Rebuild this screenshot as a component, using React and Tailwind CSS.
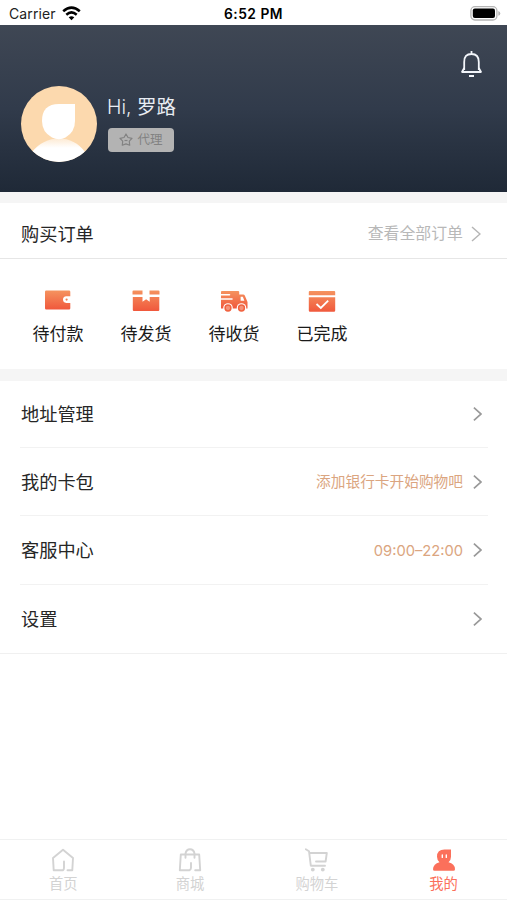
const font = "font-['Inter','Noto_Sans_CJK_SC',sans-serif]";

function Warm({ id }) {
  return (
    <defs>
      <linearGradient id={id} x1="0" y1="0" x2="0" y2="1">
        <stop offset="0" stopColor="#f5935f" />
        <stop offset="1" stopColor="#f0583c" />
      </linearGradient>
    </defs>
  );
}

function Chevron({ className, w, h, sw }) {
  return (
    <svg className={className} width={w} height={h} viewBox="0 0 10 16" fill="none" stroke="currentColor" strokeWidth={sw}>
      <path d="M1 1l8 7-8 7" />
    </svg>
  );
}

const orders = [
  {
    label: "待付款",
    icon: (
      <svg width="28" height="24" viewBox="0 0 28 24">
        <Warm id="g1" />
        <path fill="url(#g1)" d="M2.200 2.500h22.800q1.300 0 1.300 1.300v4.500h-4q-3.300.2-3.300 3.300t3.300 3.300h4v5.300q0 1.200-1.300 1.200H2.200Q1 21.400 1 20.200V3.700Q1 2.500 2.200 2.500Z" />
        <circle cx="22.600" cy="11.600" r="1.100" fill="#f28055" />
      </svg>
    ),
  },
  {
    label: "待发货",
    icon: (
      <svg width="28" height="24" viewBox="0 0 28 24">
        <defs>
          <linearGradient id="g2" gradientUnits="userSpaceOnUse" x1="0" y1="2" x2="0" y2="23">
            <stop offset="0" stopColor="#f5935f" />
            <stop offset="1" stopColor="#f0583c" />
          </linearGradient>
        </defs>
        <path fill="url(#g2)" d="M1.500 2.500h9v4h-10v-3q0-1 1-1ZM17.500 2.500h9q1 0 1 1v3h-10ZM.8 9h9.700v4.800l3.600-2.600 3.600 2.600V9h9.600v13q0 1-1 1H1.800q-1 0-1-1Z" />
      </svg>
    ),
  },
  {
    label: "待收货",
    icon: (
      <svg width="28" height="24" viewBox="0 0 28 24">
        <Warm id="g3" />
        <path fill="url(#g3)" d="M1.800 3h16.400q1 0 1 1v2.500h3.900q1.200 0 1.700 1l2.700 6.500v6.500H1V4q0-1 .8-1Z" />
        <path d="M0 6.800h9.500M0 11h12" stroke="#fff" strokeWidth="1.600" strokeLinecap="round" />
        <path d="M20.600 8.700h2.200l1.600 4h-3.800z" fill="#fff" />
        <circle cx="8" cy="20" r="4.800" fill="#fff" />
        <circle cx="21.500" cy="20" r="4.800" fill="#fff" />
        <g fill="#f4937a" stroke="#f1623f" strokeWidth="1.500">
          <circle cx="8" cy="20" r="2.900" />
          <circle cx="21.500" cy="20" r="2.900" />
        </g>
      </svg>
    ),
  },
  {
    label: "已完成",
    icon: (
      <svg width="28" height="24" viewBox="0 0 28 24">
        <defs>
          <linearGradient id="g4" gradientUnits="userSpaceOnUse" x1="0" y1="3" x2="0" y2="24">
            <stop offset="0" stopColor="#f5935f" />
            <stop offset="1" stopColor="#f0583c" />
          </linearGradient>
        </defs>
        <path fill="url(#g4)" d="M1.700 3h24.600q.9 0 .9.900v3.300H.8V3.900q0-.9.900-.9ZM.8 9.200h26.400v13.300q0 1.200-1.200 1.200H2Q.8 23.700.8 22.500Z" />
        <path d="M8.500 16l4.300 4 7.400-7.400" fill="none" stroke="#fff" strokeWidth="1.800" />
      </svg>
    ),
  },
];

const rows = [
  { label: "地址管理", height: "h-[67px]" },
  { label: "我的卡包", note: "添加银行卡开始购物吧", height: "h-[68px]" },
  { label: "客服中心", note: "09:00–22:00", height: "h-[69px]" },
  { label: "设置", height: "h-[68px]" },
];

const tabs = [
  {
    label: "首页",
    icon: (
      <svg width="24" height="24" viewBox="0 0 24 24" fill="none" stroke="currentColor" strokeWidth="1.900" strokeLinecap="round" strokeLinejoin="round">
        <path d="M12 22.200H2.700l-.7-12.200L12 1.800 22 10l-.7 12.200h-4.800M12 22.200q1-.8 1-2.500V13.500" />
      </svg>
    ),
  },
  {
    label: "商城",
    icon: (
      <svg width="24" height="24" viewBox="0 0 24 24" fill="none" stroke="currentColor" strokeWidth="1.900" strokeLinecap="round" strokeLinejoin="round">
        <path d="M11.500 22.200H1.800L2.800 6.500h18.400l1 15.700h-5M11.500 22.200q1.500-.8 1.500-2.500V15M7.500 9.800V5.500q.8-4.300 4.500-4.300t4.500 4.300v4.300" />
      </svg>
    ),
  },
  {
    label: "购物车",
    icon: (
      <svg width="24" height="24" viewBox="0 0 24 24" fill="none" stroke="currentColor" strokeWidth="1.900" strokeLinecap="round" strokeLinejoin="round">
        <path d="M.8 1.300l3.200 1.900 1.800 14.500H20M4.500 5h17.300l-1.200 8.500H11" />
        <circle cx="7.800" cy="21.600" r="1" fill="currentColor" />
        <circle cx="17.800" cy="21.600" r="1" fill="currentColor" />
      </svg>
    ),
  },
  {
    label: "我的",
    active: true,
    icon: (
      <svg width="24" height="24" viewBox="0 0 24 24">
        <path fill="#fb705b" d="M5 8.700Q5 1.500 12.500 1.500H19v7.200q0 3.400-2.500 5.500 6.300 1.300 6.500 7 0 1.500-1.500 1.500h-19Q1 22.700 1 21.200q.4-5.500 6.500-7Q5 12 5 8.700Z" />
        <path d="M10.300 7v2.400M14.300 7v2.400" stroke="#fff" strokeWidth="1.400" strokeLinecap="round" />
      </svg>
    ),
  },
];

export default function App() {
  return (
    <div className={`flex h-[900px] w-[507px] flex-col overflow-hidden bg-white text-[#262626] ${font}`}>
      <div className="grid h-[25px] shrink-0 grid-cols-3 items-center pl-[9px] pr-[6px] pt-[2px] text-[13.500px] leading-[20px]">
        <div className="flex items-center gap-[6px] text-[14px] tracking-[0.1px] text-[#222]">
          Carrier
          <svg width="19" height="15" viewBox="0 0 19 15" fill="none" stroke="#000" strokeWidth="2.500">
            <path d="M1.200 5.300q8.300-7.400 16.600 0M4.300 8.700q5.200-4.600 10.400 0" />
            <path d="M6.700 11.300q2.800-2.300 5.600 0L9.500 14.200z" fill="#000" stroke="none" />
          </svg>
        </div>
        <div className="whitespace-nowrap pr-[3px] text-center text-[13.800px] font-semibold tracking-[0.500px] text-black">6:52 PM</div>
        <svg className="justify-self-end" width="31" height="15" viewBox="0 0 31 15">
          <rect x=".9" y=".7" width="26" height="13.300" rx="4" fill="#fff" stroke="#b5b5b5" strokeWidth="1.300" />
          <rect x="2.800" y="2.600" width="22.200" height="9.500" rx="2" />
          <path d="M28.300 5q2 .6 2 2.400t-2 2.400z" fill="#b5b5b5" />
        </svg>
      </div>

      <header className="flex h-[167px] shrink-0 items-start justify-between bg-linear-to-b from-[#3f4754] via-[#313b4b] to-[#1f2937] pl-[21px] pr-[24px]">
        <div className="flex gap-[11px] pt-[61px]">
          <svg width="76" height="76" viewBox="0 0 76 76">
            <defs>
              <clipPath id="face"><circle cx="38" cy="38" r="38" /></clipPath>
              <linearGradient id="neck" x1="0" y1="0" x2="0" y2="1">
                <stop offset="0" stopColor="#fdead3" />
                <stop offset=".4" stopColor="#fff" />
              </linearGradient>
            </defs>
            <g clipPath="url(#face)">
              <path fill="#fcd9ae" d="M0 0h76v76H0z" />
              <path fill="url(#neck)" d="M11 66Q22 52.500 38 52.500T64 66V76H11Z" />
              <path fill="#fff" d="M21 35Q21 18 38 18H54V35Q54 46 44.500 51.500 38 55 31 51.500 21 46 21 35Z" />
            </g>
          </svg>
          <div className="flex flex-col items-start pt-[6px]">
            <div className="-ml-px h-[30px] whitespace-nowrap text-[19.500px] leading-[30px] text-[#e9edf3]"><span className="font-light">Hi, </span>罗路</div>
            <div className="mt-[6px] flex h-[24px] w-[66px] items-center justify-center gap-[4px] rounded-[4px] bg-[#b3b3b3] text-[12.500px] leading-[24px] text-[#828282]">
              <svg width="14" height="14" viewBox="0 0 14 14" fill="none" stroke="currentColor" strokeWidth="1.200" strokeLinejoin="round">
                <path d="M7 1l2 3.500 4 .8-2.700 2.900.4 4L7 10.900l-3.700 1.300.4-4L1 5.300l4-.8z" />
                <path d="M5.500 7.500h3" />
              </svg>
              代理
            </div>
          </div>
        </div>
        <svg className="mt-[25px]" width="23" height="29" viewBox="0 0 23 29" fill="none" stroke="#f3f6fb" strokeWidth="1.800">
          <path d="M11.500 1v3M1.500 22h20M4.200 20V12q0-8 7.300-8t7.300 8v8M9 26h5" />
          <path d="M4.200 18l-2.200 4M18.800 18l2.200 4" />
        </svg>
      </header>

      <div className="h-[11px] shrink-0 bg-[#f5f5f5]" />

      <section className="h-[166px] shrink-0">
        <div className="flex h-[56px] items-center justify-between border-b border-[#e6e6e6] pl-[21px] pr-[26px] pt-[6px]">
          <div className="text-[18.200px] leading-[26px]">购买订单</div>
          <div className="flex items-center gap-[8px] text-[15.900px] leading-[24px] text-[#b8b8b8]">
            <span className="pt-px">查看全部订单</span>
            <Chevron className="text-[#b5b5b5]" w={10} h={18} sw={1.5} />
          </div>
        </div>
        <div className="flex pl-[14px] pt-[29px]">
          {orders.map((o) => (
            <div key={o.label} className="flex w-[88px] flex-col items-center gap-[9px]">
              {o.icon}
              <div className="text-[17px] leading-[26px] text-[#1a1a1a]">{o.label}</div>
            </div>
          ))}
        </div>
      </section>

      <div className="h-[12px] shrink-0 bg-[#f5f5f5]" />

      <section className="shrink-0 border-b border-[#f0f0f0]">
        {rows.map((r, i) => (
          <div key={r.label} className="pl-[20px] pr-[19px]">
            <div className={`flex items-center justify-between pl-px pr-[6px] ${r.height} ${i < 3 ? "border-b border-[#f2f2f2]" : ""}`}>
              <div className="text-[18.200px] leading-[26px]">{r.label}</div>
              <div className="flex items-center gap-[10px] text-[14.700px] leading-[24px] text-[#dba580]">
                <span className="pt-px">{r.note}</span>
                <Chevron className="text-[#999]" w={9} h={16} sw={1.9} />
              </div>
            </div>
          </div>
        ))}
      </section>

      <nav className="mt-auto flex h-[61px] shrink-0 border-y border-[#f0f1f1]">
        {tabs.map((t) => (
          <div key={t.label} className={`flex flex-1 flex-col items-center pt-[8px] ${t.active ? "text-[#fb705b]" : "text-[#d3d3d3]"}`}>
            {t.icon}
            <div className="mt-[2px] text-[14.300px] leading-[20px]">{t.label}</div>
          </div>
        ))}
      </nav>
    </div>
  );
}
